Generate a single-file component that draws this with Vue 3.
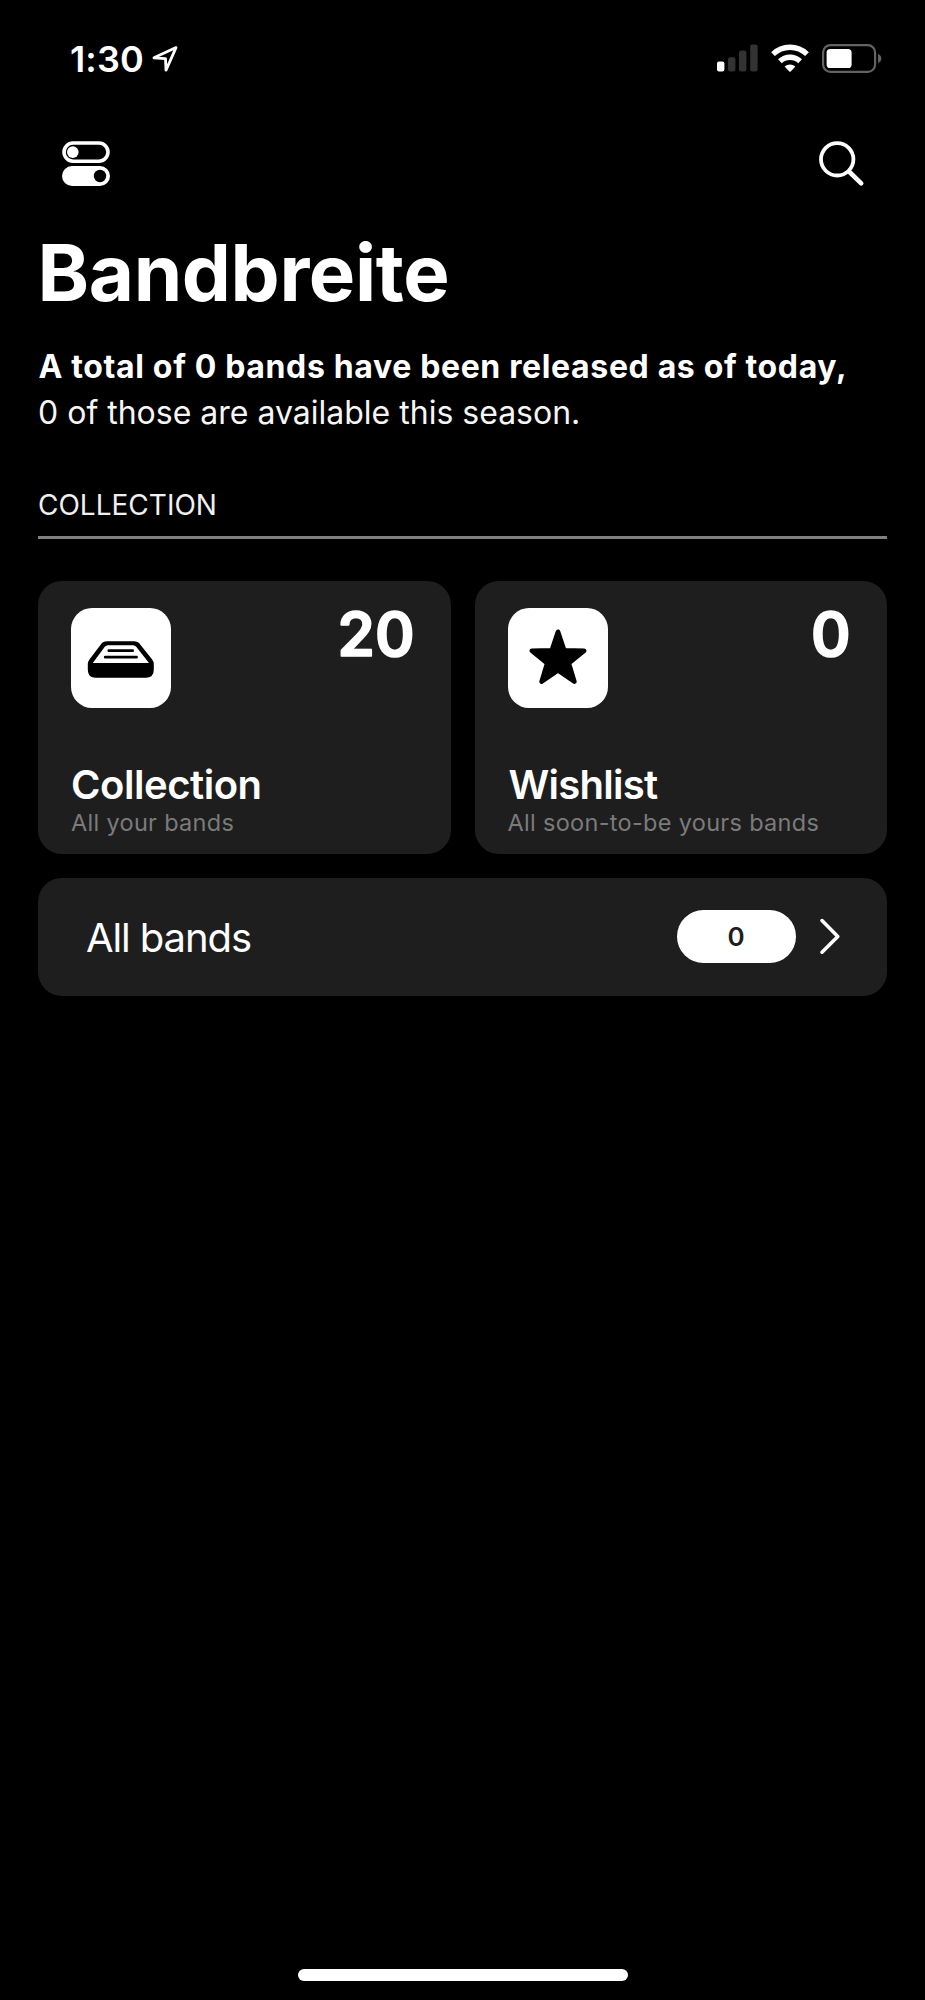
<script setup>
const cards = [
  { id: 'collection', title: 'Collection', note: 'All your bands', count: '20' },
  { id: 'wishlist', title: 'Wishlist', note: 'All soon-to-be yours bands', count: '0' },
]
</script>

<template>
  <div class="screen">
    <header class="status">
      <div class="clock">
        <span class="time">1:30</span>
        <svg class="locate" width="28" height="28" viewBox="0 0 28 28">
          <path d="M25 2.6 L3 12.8 L14.5 13.6 L15 25.2 Z" fill="none" stroke="#fff" stroke-width="2.8" stroke-linejoin="round" />
        </svg>
      </div>
      <div class="indicators">
        <svg width="41" height="29" viewBox="0 0 41 29">
          <rect x="0" y="17.5" width="7.4" height="10" rx="2" fill="#fff" />
          <rect x="11" y="13.3" width="7.4" height="14.2" rx="2" fill="#333" />
          <rect x="22" y="6.5" width="7.4" height="21" rx="2" fill="#333" />
          <rect x="33.2" y="0.5" width="7.4" height="27" rx="2" fill="#333" />
        </svg>
        <svg class="wifi" width="38" height="29" viewBox="0 0 38 29">
          <g fill="none" stroke="#fff" stroke-width="5.4">
            <path d="M2 10.1 A24.5 24.5 0 0 1 36 10.1" />
            <path d="M8.9 17.3 A14.8 14.8 0 0 1 29.1 17.3" />
          </g>
          <path d="M13.6 22.5 A8.2 8.2 0 0 1 24.4 22.5 L19.7 27.4 Q19 28.1 18.3 27.4 Z" fill="#fff" />
        </svg>
        <svg class="battery" width="60" height="29" viewBox="0 0 60 29">
          <rect x="1.1" y="1.1" width="52" height="26.8" rx="7.4" fill="none" stroke="#636363" stroke-width="2.2" />
          <rect x="4.6" y="5" width="25" height="19" rx="3.6" fill="#fff" />
          <path d="M56 10 Q59.3 11.2 59.3 14.5 Q59.3 17.8 56 19 Z" fill="#636363" />
        </svg>
      </div>
    </header>

    <nav class="toolbar">
      <svg width="48" height="46" viewBox="0 0 48 46">
        <rect x="2" y="2" width="44" height="18.2" rx="9.1" fill="none" stroke="#fff" stroke-width="3.6" />
        <circle cx="10.8" cy="11.1" r="5.8" fill="#fff" />
        <rect x="0" y="25" width="48" height="20" rx="10" fill="#fff" />
        <circle cx="38" cy="35" r="6.2" fill="#000" />
      </svg>
      <svg width="46" height="46" viewBox="0 0 46 46">
        <circle cx="18.2" cy="18.3" r="16.2" fill="none" stroke="#fff" stroke-width="3.8" />
        <path d="M30 30.5 L42.2 42.4" stroke="#fff" stroke-width="4.6" stroke-linecap="round" />
      </svg>
    </nav>

    <main>
      <h1>Bandbreite</h1>
      <p class="summary">
        <strong>A total of 0 bands have been released as of today,</strong>
        <span>0 of those are available this season.</span>
      </p>

      <h2>COLLECTION</h2>

      <section class="cards">
        <article v-for="card in cards" :key="card.id" class="card">
          <div class="card-top">
            <svg class="tile" width="100" height="100" viewBox="0 0 100 100">
              <g v-if="card.id === 'collection'">
                <path d="M16.8 56 Q16.8 53.6 18.6 51.2 L29.8 36.4 Q32 33.2 36 33.2 H63 Q67 33.2 69.2 36.4 L81 51.2 Q82.8 53.6 82.8 56 V61.8 Q82.8 69.8 74.8 69.8 H24.8 Q16.8 69.8 16.8 61.8 Z" fill="#000" />
                <path d="M21.8 55 L33.8 38.8 Q35 37.2 37 37.2 H62 Q64 37.2 65.2 38.8 L78 55 Z" fill="#fff" />
                <path d="M37.8 42.7 H61.7 M34.2 49.2 H65.6" stroke="#000" stroke-width="2.7" stroke-linecap="round" />
              </g>
              <path v-else d="M50 23.8 L56.2 42.2 L76.2 42.8 L60.9 55.3 L66.4 73.6 L50 62.4 L33.6 73.6 L39.1 55.3 L23.8 42.8 L43.8 42.2 Z" fill="#000" stroke="#000" stroke-width="4.6" stroke-linejoin="round" />
            </svg>
            <svg class="count" width="124" height="100" viewBox="0 0 124 100">
              <text x="119.5" y="68.2" text-anchor="end">{{ card.count }}</text>
            </svg>
          </div>
          <div>
            <h3 :class="card.id">{{ card.title }}</h3>
            <p class="note">{{ card.note }}</p>
          </div>
        </article>
      </section>

      <section class="row">
        <span class="row-title">All bands</span>
        <span class="pill">0</span>
        <svg class="chevron" width="22" height="38" viewBox="0 0 22 38">
          <path d="M3 2.6 L18.8 18.4 L3 34.2" fill="none" stroke="#fff" stroke-width="3.6" stroke-linecap="round" stroke-linejoin="round" />
        </svg>
      </section>
    </main>

    <div class="home"></div>
  </div>
</template>

<style>
body {
  background: #000;
}
</style>

<style scoped>
.screen {
  box-sizing: border-box;
  width: 925px;
  height: 2000px;
  background: #000;
  color: #fff;
  font-family: Inter, "Liberation Sans", sans-serif;
  display: flex;
  flex-direction: column;
}
svg {
  display: block;
  flex: none;
}
h1,
h2,
h3,
p {
  margin: 0;
}
.status {
  height: 117px;
  display: flex;
  justify-content: space-between;
  align-items: center;
  padding: 0 43px 1px 70px;
}
.clock,
.indicators {
  display: flex;
  align-items: center;
}
.time {
  font-size: 36px;
  font-weight: 600;
  letter-spacing: 0.13px;
  line-height: 44px;
}
.locate {
  margin-left: 7px;
}
.wifi,
.battery {
  margin-left: 13px;
}
.toolbar {
  height: 91px;
  display: flex;
  justify-content: space-between;
  align-items: center;
  padding: 0 60.5px 0 61.5px;
}
main {
  padding: 0 38px;
}
h1 {
  font-size: 78px;
  font-weight: 700;
  line-height: 127px;
  letter-spacing: -0.38px;
  margin-left: -0.5px;
}
.summary {
  margin-top: 8px;
  font-size: 32px;
  line-height: 46px;
  white-space: nowrap;
}
.summary strong,
.summary span {
  display: block;
}
.summary strong {
  font-weight: 700;
  letter-spacing: 0.645px;
  padding-left: 0.5px;
}
.summary span {
  color: #f6f6f6;
}
h2 {
  margin-top: 52px;
  padding-bottom: 14px;
  border-bottom: 3px solid #808083;
  font-size: 28px;
  font-weight: 400;
  line-height: 34px;
  color: #f0f0f0;
}
.cards {
  margin-top: 42px;
  display: grid;
  grid-template-columns: 1fr 1fr;
  gap: 24px;
}
.card {
  box-sizing: border-box;
  height: 273px;
  padding: 27px 32px 17px 33px;
  border-radius: 24px;
  background: #1e1e1e;
  display: flex;
  flex-direction: column;
  justify-content: space-between;
}
.card-top {
  display: flex;
  justify-content: space-between;
  align-items: flex-start;
}
.tile {
  background: #fff;
  border-radius: 21px;
}
.count {
  margin-top: -20px;
}
.count text {
  font: 600 60px Inter, "Liberation Sans", sans-serif;
  fill: #fff;
  stroke: #fff;
  stroke-width: 1.6px;
  stroke-linejoin: round;
}
h3 {
  font-size: 40px;
  font-weight: 600;
  line-height: 48px;
}
.collection {
  letter-spacing: -0.45px;
}
.wishlist {
  padding-left: 1px;
  letter-spacing: -0.75px;
}
.note {
  font-size: 23.5px;
  line-height: 28px;
  letter-spacing: 0.31px;
  color: #7b7b7b;
  white-space: nowrap;
}
.row {
  box-sizing: border-box;
  height: 118px;
  margin-top: 24px;
  padding: 0 46px 0 48px;
  border-radius: 24px;
  background: #1e1e1e;
  display: flex;
  align-items: center;
}
.row-title {
  flex: 1;
  padding-top: 2px;
  font-size: 40px;
  line-height: 48px;
  letter-spacing: -1.1px;
}
.pill {
  box-sizing: border-box;
  width: 119px;
  height: 53px;
  margin-bottom: 1px;
  padding-right: 1px;
  border-radius: 27px;
  background: #fff;
  color: #1e1e1e;
  font-size: 26px;
  font-weight: 600;
  line-height: 53px;
  text-align: center;
}
.chevron {
  margin-left: 23px;
}
.home {
  width: 330px;
  height: 12px;
  margin: auto auto 19px;
  border-radius: 6px;
  background: #fff;
}
</style>
